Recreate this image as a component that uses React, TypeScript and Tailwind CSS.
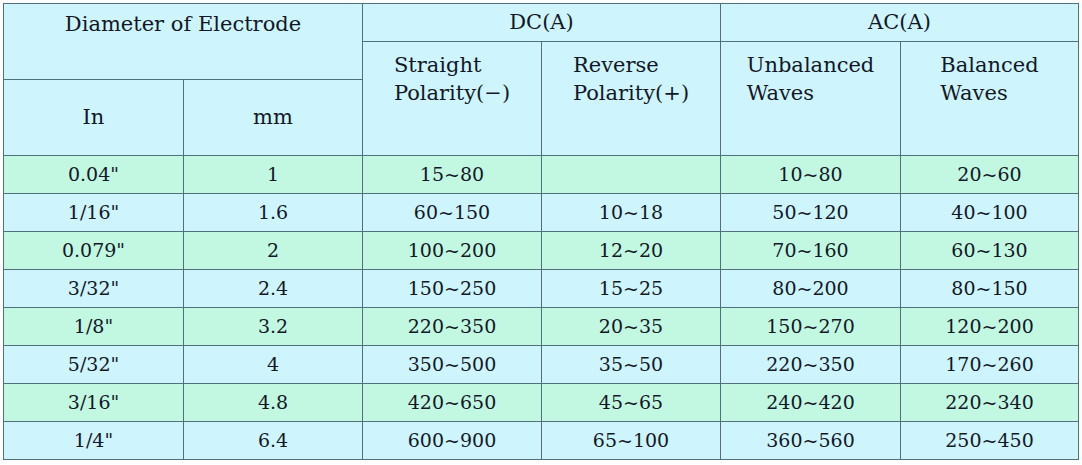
const rows: string[][] = [
  ['0.04"', "1", "15~80", "", "10~80", "20~60"],
  ['1/16"', "1.6", "60~150", "10~18", "50~120", "40~100"],
  ['0.079"', "2", "100~200", "12~20", "70~160", "60~130"],
  ['3/32"', "2.4", "150~250", "15~25", "80~200", "80~150"],
  ['1/8"', "3.2", "220~350", "20~35", "150~270", "120~200"],
  ['5/32"', "4", "350~500", "35~50", "220~350", "170~260"],
  ['3/16"', "4.8", "420~650", "45~65", "240~420", "220~340"],
  ['1/4"', "6.4", "600~900", "65~100", "360~560", "250~450"],
];

const line = "border border-[#52707c]";

function SubHead({ a, b }: { a: string; b: string }) {
  return (
    <th rowSpan={2} className={`${line} align-top pt-[9px] font-normal`}>
      <div className="inline-block text-left leading-[28px]">
        {a}
        <br />
        {b}
      </div>
    </th>
  );
}

export default function App() {
  return (
    <div className="w-[1082px] h-[465px] bg-white pl-[3px] pt-[3px]">
      <div className="w-[1076px] border border-[#97a6ab]">
        <table
          className="w-full table-fixed border-collapse text-[#121826] text-[19px] -m-px"
          style={{ fontFamily: '"DejaVu Serif", "Liberation Serif", serif' }}
        >
          <colgroup>
            <col className="w-[180px]" />
            <col className="w-[179px]" />
            <col className="w-[179px]" />
            <col className="w-[179px]" />
            <col className="w-[180px]" />
            <col className="w-[178px]" />
          </colgroup>
          <thead className="bg-[#cef4fe] text-[21px]">
            <tr className="h-[38px]">
              <th colSpan={2} rowSpan={2} className={`${line} align-top pt-[5px] font-normal`}>
                Diameter of Electrode
              </th>
              <th colSpan={2} className={`${line} font-normal`}>
                DC(A)
              </th>
              <th colSpan={2} className={`${line} font-normal`}>
                AC(A)
              </th>
            </tr>
            <tr className="h-[38px]">
              <SubHead a="Straight" b="Polarity(−)" />
              <SubHead a="Reverse" b="Polarity(+)" />
              <SubHead a="Unbalanced" b="Waves" />
              <SubHead a="Balanced" b="Waves" />
            </tr>
            <tr className="h-[76px]">
              <th className={`${line} font-normal`}>In</th>
              <th className={`${line} font-normal`}>mm</th>
            </tr>
          </thead>
          <tbody>
            {rows.map((r, i) => (
              <tr
                key={i}
                className={`h-[38px] ${i % 2 === 0 ? "bg-[#c2f7e2]" : "bg-[#cef4fe]"}`}
              >
                {r.map((c, j) => (
                  <td key={j} className={`${line} text-center`}>
                    {c}
                  </td>
                ))}
              </tr>
            ))}
          </tbody>
        </table>
      </div>
    </div>
  );
}
